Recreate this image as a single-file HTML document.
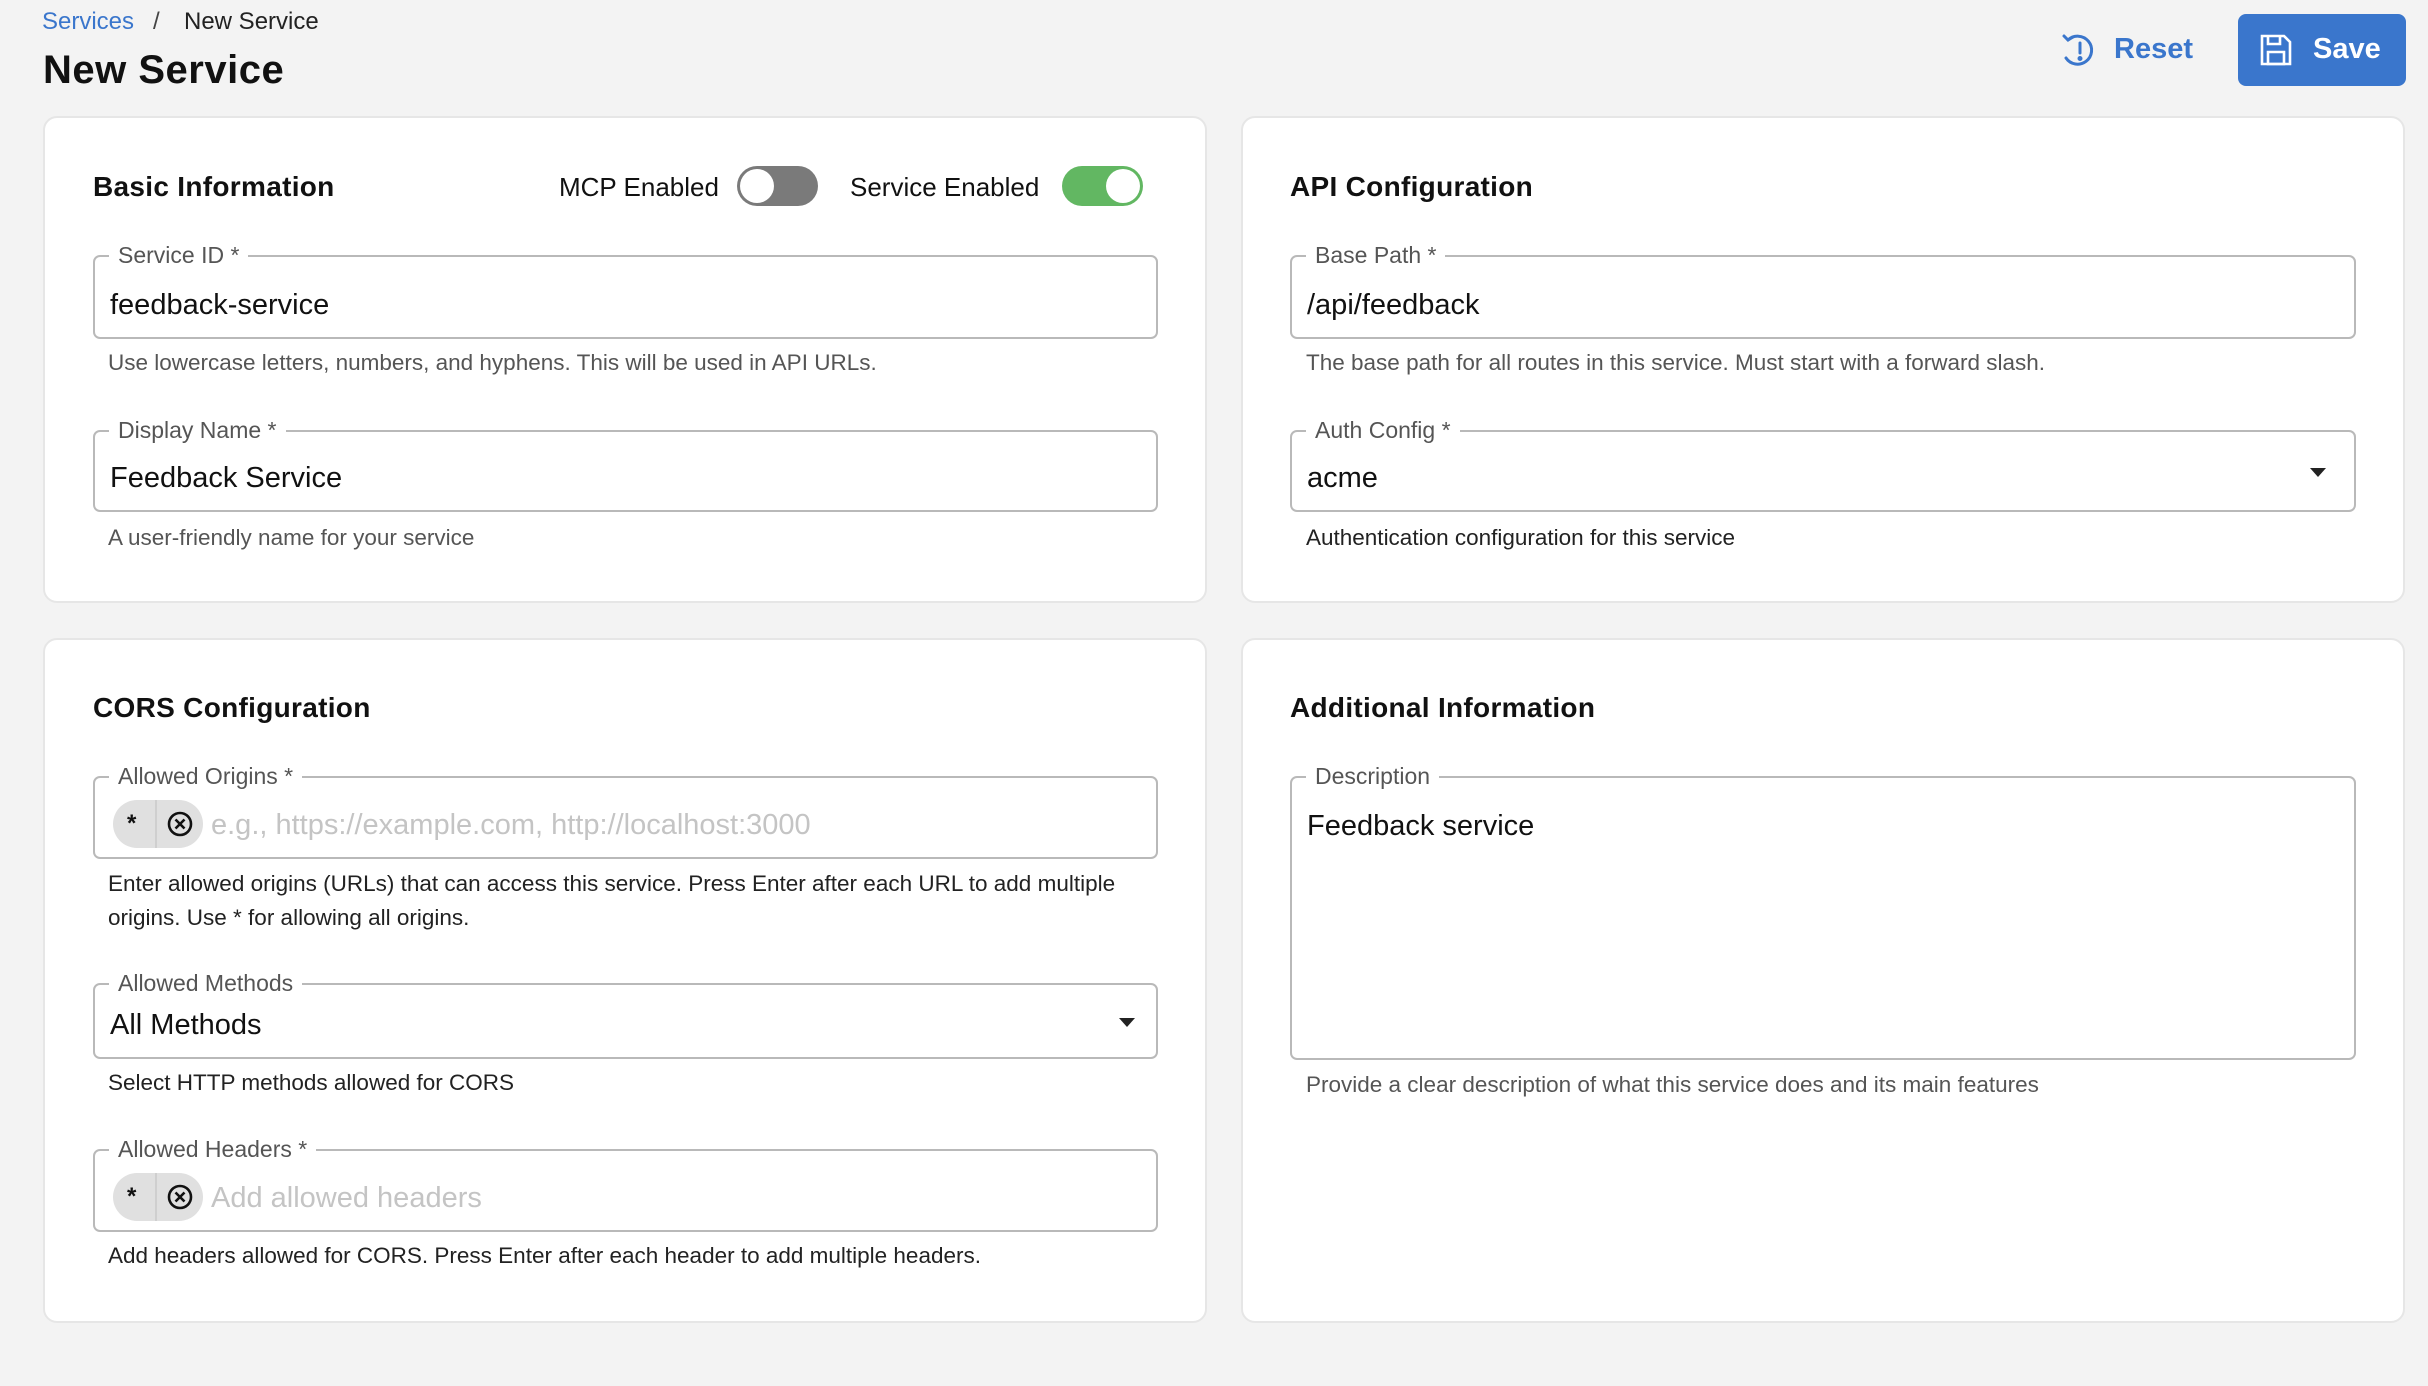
<!DOCTYPE html>
<html><head><meta charset="utf-8"><style>
*{box-sizing:border-box;margin:0;padding:0}
body{width:2428px;height:1386px;background:#f3f3f3;font-family:"Liberation Sans",sans-serif;color:#111;position:relative;overflow:hidden}
.a{position:absolute;white-space:nowrap}
.card{position:absolute;background:#fff;border:2px solid #e6e6e6;border-radius:14px}
.h{position:absolute;font-size:28px;font-weight:bold;color:#111;letter-spacing:0.3px}
.f{position:absolute;border:2px solid #b9b9b9;border-radius:7px}
.lab{position:absolute;top:-16px;left:14px;background:#fff;padding:0 9px;font-size:23px;color:#555;line-height:28px}
.val{position:absolute;left:15px;font-size:29px;color:#111}
.help{position:absolute;font-size:22.5px;color:#555;line-height:34px}
.help.d{color:#222}
.chip{position:absolute;left:18px;width:90px;height:48px;background:#e0e0e0;border-radius:24px}
.chip .s{position:absolute;left:14px;top:10px;font-size:24px;font-weight:bold}
.chip .dv{position:absolute;left:42px;top:0;width:2px;height:48px;background:#cfcfcf}
.chip svg{position:absolute;left:54px;top:11px}
.ph{position:absolute;left:116px;font-size:29px;color:#c4c4c4}
.arr{position:absolute;width:0;height:0;border-left:8px solid transparent;border-right:8px solid transparent;border-top:9px solid #222}
.tg{position:absolute;width:81px;height:40px;border-radius:20px}
.tg i{position:absolute;top:3px;width:34px;height:34px;border-radius:50%;background:#fff}
</style></head><body>
<div class="a" style="left:42px;top:8px;font-size:24px;color:#3a76cc">Services</div>
<div class="a" style="left:153px;top:8px;font-size:24px;color:#444">/</div>
<div class="a" style="left:184px;top:8px;font-size:24px;color:#222">New Service</div>
<div class="a" style="left:43px;top:48px;font-size:40px;font-weight:bold;letter-spacing:0.5px">New Service</div>

<svg class="a" style="left:2060px;top:32px" width="36" height="36" viewBox="0 0 36 36" fill="none" stroke="#3a76cc" stroke-width="3" stroke-linecap="round"><path d="M8 8 A14 14 0 1 1 6 26"/><path d="M4 4 L8 8 L13 5"/><path d="M20 11 V21"/><circle cx="20" cy="26.5" r="1" fill="#3a76cc"/></svg>
<div class="a" style="left:2114px;top:33px;font-size:29px;font-weight:bold;color:#3a76cc">Reset</div>
<div class="a" style="left:2238px;top:14px;width:168px;height:72px;background:#3a76cc;border-radius:8px"></div>
<svg class="a" style="left:2259px;top:33px" width="34" height="34" viewBox="0 0 34 34" fill="none" stroke="#fff" stroke-width="2.6"><path d="M3 3 H25 L31 9 V31 H3 Z"/><path d="M9 3 V11 H21 V3"/><path d="M9 19 H25 V31 H9 Z"/></svg>
<div class="a" style="left:2313px;top:33px;font-size:29px;font-weight:bold;color:#fff">Save</div>

<div class="card" style="left:43px;top:116px;width:1164px;height:487px"></div>
<div class="h" style="left:93px;top:171px">Basic Information</div>
<div class="a" style="left:559px;top:172px;font-size:26px">MCP Enabled</div>
<div class="tg" style="left:737px;top:166px;background:#7a7a7a"><i style="left:3px"></i></div>
<div class="a" style="left:850px;top:172px;font-size:26px">Service Enabled</div>
<div class="tg" style="left:1062px;top:166px;background:#62b762"><i style="left:44px"></i></div>

<div class="f" style="left:93px;top:255px;width:1065px;height:84px"><div class="lab">Service ID *</div><div class="val" style="top:32px">feedback-service</div></div>
<div class="help" style="left:108px;top:346px">Use lowercase letters, numbers, and hyphens. This will be used in API URLs.</div>
<div class="f" style="left:93px;top:430px;width:1065px;height:82px"><div class="lab">Display Name *</div><div class="val" style="top:30px">Feedback Service</div></div>
<div class="help" style="left:108px;top:521px">A user-friendly name for your service</div>

<div class="card" style="left:1241px;top:116px;width:1164px;height:487px"></div>
<div class="h" style="left:1290px;top:171px">API Configuration</div>
<div class="f" style="left:1290px;top:255px;width:1066px;height:84px"><div class="lab">Base Path *</div><div class="val" style="top:32px">/api/feedback</div></div>
<div class="help" style="left:1306px;top:346px">The base path for all routes in this service. Must start with a forward slash.</div>
<div class="f" style="left:1290px;top:430px;width:1066px;height:82px"><div class="lab">Auth Config *</div><div class="val" style="top:30px">acme</div><div class="arr" style="left:1018px;top:36px"></div></div>
<div class="help d" style="left:1306px;top:521px">Authentication configuration for this service</div>

<div class="card" style="left:43px;top:638px;width:1164px;height:685px"></div>
<div class="h" style="left:93px;top:692px">CORS Configuration</div>
<div class="f" style="left:93px;top:776px;width:1065px;height:83px"><div class="lab">Allowed Origins *</div>
<div class="chip" style="top:22px"><span class="s">*</span><span class="dv"></span><svg width="26" height="26" viewBox="0 0 26 26" fill="none" stroke="#111" stroke-width="2.6"><circle cx="13" cy="13" r="11"/><path d="M8.5 8.5 L17.5 17.5 M17.5 8.5 L8.5 17.5"/></svg></div>
<div class="ph" style="top:31px">e.g., https://example.com, http://localhost:3000</div></div>
<div class="help d" style="left:108px;top:867px">Enter allowed origins (URLs) that can access this service. Press Enter after each URL to add multiple<br>origins. Use * for allowing all origins.</div>
<div class="f" style="left:93px;top:983px;width:1065px;height:76px"><div class="lab">Allowed Methods</div><div class="val" style="top:24px">All Methods</div><div class="arr" style="left:1024px;top:33px"></div></div>
<div class="help d" style="left:108px;top:1066px">Select HTTP methods allowed for CORS</div>
<div class="f" style="left:93px;top:1149px;width:1065px;height:83px"><div class="lab">Allowed Headers *</div>
<div class="chip" style="top:22px"><span class="s">*</span><span class="dv"></span><svg width="26" height="26" viewBox="0 0 26 26" fill="none" stroke="#111" stroke-width="2.6"><circle cx="13" cy="13" r="11"/><path d="M8.5 8.5 L17.5 17.5 M17.5 8.5 L8.5 17.5"/></svg></div>
<div class="ph" style="top:31px">Add allowed headers</div></div>
<div class="help d" style="left:108px;top:1239px">Add headers allowed for CORS. Press Enter after each header to add multiple headers.</div>

<div class="card" style="left:1241px;top:638px;width:1164px;height:685px"></div>
<div class="h" style="left:1290px;top:692px">Additional Information</div>
<div class="f" style="left:1290px;top:776px;width:1066px;height:284px"><div class="lab">Description</div><div class="val" style="top:32px">Feedback service</div></div>
<div class="help" style="left:1306px;top:1068px">Provide a clear description of what this service does and its main features</div>
</body></html>
